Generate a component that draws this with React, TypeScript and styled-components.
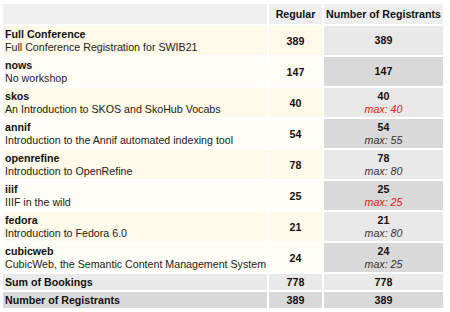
import styled, { createGlobalStyle } from 'styled-components';

type Workshop = {
  id: string;
  title: string;
  regular: number;
  registrants: number;
  max?: number;
};

const workshops: Workshop[] = [
  { id: 'Full Conference', title: 'Full Conference Registration for SWIB21', regular: 389, registrants: 389 },
  { id: 'nows', title: 'No workshop', regular: 147, registrants: 147 },
  { id: 'skos', title: 'An Introduction to SKOS and SkoHub Vocabs', regular: 40, registrants: 40, max: 40 },
  { id: 'annif', title: 'Introduction to the Annif automated indexing tool', regular: 54, registrants: 54, max: 55 },
  { id: 'openrefine', title: 'Introduction to OpenRefine', regular: 78, registrants: 78, max: 80 },
  { id: 'iiif', title: 'IIIF in the wild', regular: 25, registrants: 25, max: 25 },
  { id: 'fedora', title: 'Introduction to Fedora 6.0', regular: 21, registrants: 21, max: 80 },
  { id: 'cubicweb', title: 'CubicWeb, the Semantic Content Management System', regular: 24, registrants: 24, max: 25 },
];

const GlobalStyle = createGlobalStyle`
  body {
    margin: 0;
    background: #fff;
    font-family: "Liberation Sans", Arial, sans-serif;
    font-size: 8pt;
    color: #111;
  }
`;

function App() {
  return (
    <Page>
      <GlobalStyle />
      <Table>
        <colgroup>
          <col style={{ width: 264 }} />
          <col style={{ width: 53 }} />
          <col style={{ width: 119 }} />
        </colgroup>
        <thead>
          <tr>
            <Th />
            <Th>Regular</Th>
            <Th>Number of Registrants</Th>
          </tr>
        </thead>
        <tbody>
          {workshops.map((w, i) => (
            <tr key={w.id}>
              <NameCell $odd={i % 2 === 0}>
                <Name>{w.id}</Name>
                <Title>{w.title}</Title>
              </NameCell>
              <NumCell $odd={i % 2 === 0}>{w.regular}</NumCell>
              <TotalCell $odd={i % 2 === 0}>
                <div>{w.registrants}</div>
                {w.max !== undefined && (
                  <Max $full={w.registrants >= w.max}>max: {w.max}</Max>
                )}
              </TotalCell>
            </tr>
          ))}
          <tr>
            <SumLabel $odd>Sum of Bookings</SumLabel>
            <SumValue $odd>778</SumValue>
            <SumValue $odd>778</SumValue>
          </tr>
          <tr>
            <SumLabel $odd={false}>Number of Registrants</SumLabel>
            <SumValue $odd={false}>389</SumValue>
            <SumValue $odd={false}>389</SumValue>
          </tr>
        </tbody>
      </Table>
    </Page>
  );
}

export default App;

const Page = styled.div`
  padding: 2px 1px;
`;

const Table = styled.table`
  border-collapse: separate;
  border-spacing: 2px;
  table-layout: fixed;
  width: 444px;
`;

const Th = styled.th`
  background: #efefef;
  height: 12px;
  padding: 4px 0;
  font-weight: bold;
  text-align: center;
  white-space: nowrap;
  color: #111;
  line-height: 12px;
`;

const NameCell = styled.td<{ $odd: boolean }>`
  background: ${(p) => (p.$odd ? '#fef9e8' : '#fffdf7')};
  padding: 2px 0 2px 2px;
  line-height: 12.5px;
  vertical-align: middle;
  white-space: nowrap;
`;

const Name = styled.div`
  font-weight: bold;
  color: #111;
`;

const Title = styled.div`
  color: #222;
`;

const NumCell = styled.td<{ $odd: boolean }>`
  background: ${(p) => (p.$odd ? '#fef9e8' : '#fffdf7')};
  padding: 2px 0;
  text-align: center;
  font-weight: bold;
  vertical-align: middle;
`;

const TotalCell = styled.td<{ $odd: boolean }>`
  background: ${(p) => (p.$odd ? '#e9e9e9' : '#d9d9d9')};
  padding: 2px 0;
  text-align: center;
  font-weight: bold;
  line-height: 12.5px;
  vertical-align: middle;
`;

const Max = styled.div<{ $full: boolean }>`
  font-weight: normal;
  font-style: italic;
  color: ${(p) => (p.$full ? '#d22' : '#333')};
`;

const SumLabel = styled.td<{ $odd: boolean }>`
  background: ${(p) => (p.$odd ? '#e9e9e9' : '#d9d9d9')};
  padding: 2px 0 2px 2px;
  height: 12px;
  line-height: 12px;
  font-weight: bold;
`;

const SumValue = styled(SumLabel)`
  padding: 2px 0;
  text-align: center;
`;
